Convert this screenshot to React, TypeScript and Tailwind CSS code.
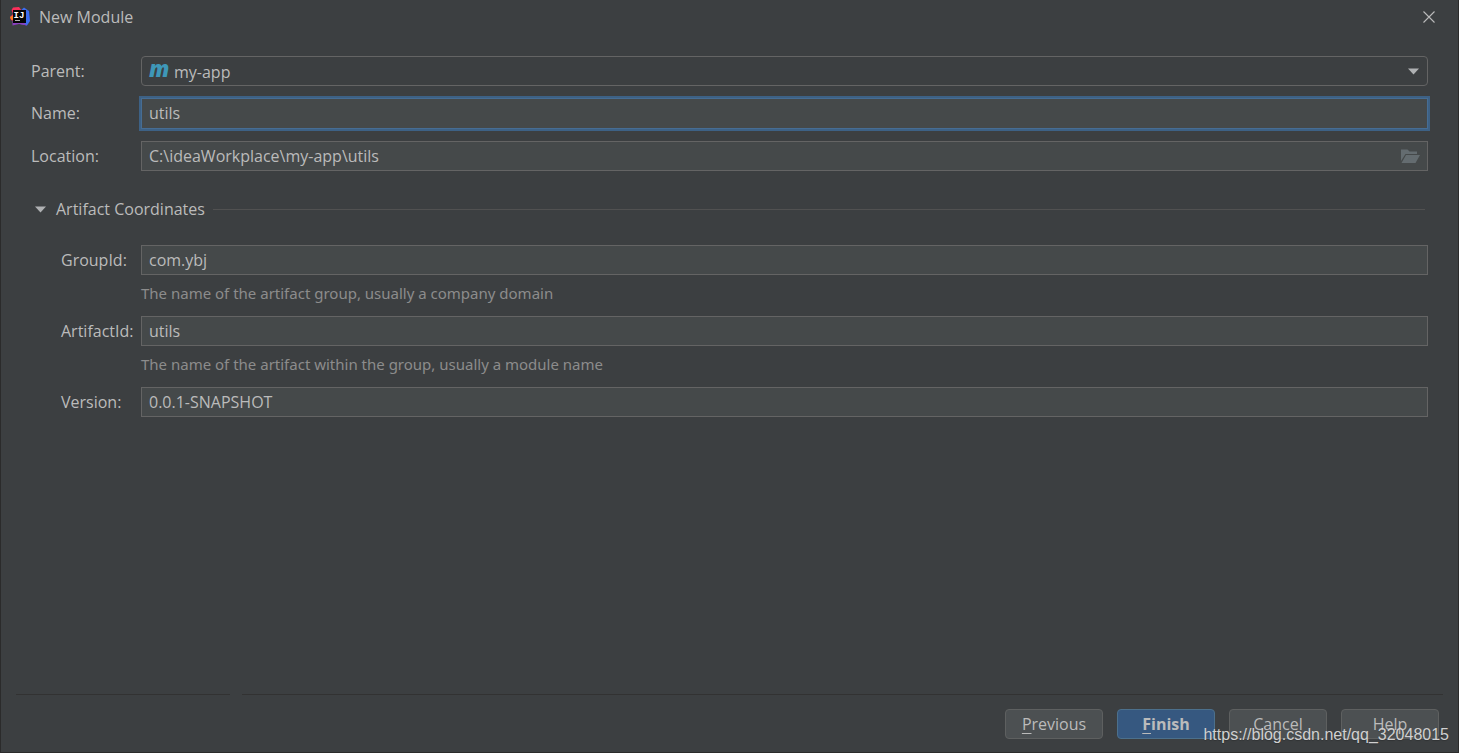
import { useState, type InputHTMLAttributes, type ReactNode } from 'react';
import { clsx } from 'clsx';

const IdeaLogo = () => (
    <svg viewBox="0 0 20 20" className="w-5 h-5 shrink-0" aria-hidden="true">
        <path d="M3 0.5 L9 0 L12 4 L8 16 L1 13 L0 10 L3 7 L1.5 3 Z" fill="#fc2f5b" />
        <path d="M0 10 L4 8 L5 13.5 L1 12.5 Z" fill="#fc801d" />
        <path d="M10 4 L14 0.5 L19 4 L20 14 L17 18.5 L10 17 Z" fill="#3b6cf0" />
        <path d="M2.5 14 L12 14 L17 18.5 L9 17 L2.5 18.5 Z" fill="#8a3fc0" />
        <rect x="3" y="3" width="13" height="13" fill="#050505" />
        <text x="3.5" y="10.5" fill="#fff" fontFamily="Liberation Mono" fontSize="9" fontWeight="700">IJ</text>
        <rect x="5" y="13" width="5" height="1" fill="#b0b0b0" />
    </svg>
);

const CloseIcon = () => (
    <svg viewBox="0 0 12 12" className="w-3 h-3" aria-hidden="true">
        <path d="M0.5 0.5 L11.5 11.5 M11.5 0.5 L0.5 11.5" stroke="#bbbbbb" strokeWidth="1.1" />
    </svg>
);

const ArrowIcon = ({ className }: { className?: string }) => (
    <svg viewBox="0 0 11 7" className={clsx('w-[11px] h-[7px]', className)} aria-hidden="true">
        <path d="M0 0.5 H11 L5.5 6.5 Z" fill="#afb1b3" />
    </svg>
);

const FolderIcon = () => (
    <svg viewBox="0 0 19 14" className="w-[19px] h-[14px]" aria-hidden="true">
        <path d="M0 0.5 H6.5 L8.5 2.5 H16 V5 H4.5 L0 12 Z" fill="#646c70" />
        <path d="M5 6 H19 L14.5 14 H0.5 Z" fill="#646c70" />
    </svg>
);

interface RowProps {
    id: string;
    label: string;
    hint?: string;
    nested?: boolean;
    children: ReactNode;
}

const Row = ({ id, label, hint, nested, children }: RowProps) => (
    <div className="flex items-start">
        <label
            htmlFor={id}
            className={clsx('shrink-0 h-[30px] leading-[30px]', nested ? 'w-20' : 'w-[110px]')}
        >
            {label}
        </label>
        <div className="flex-1 min-w-0 relative">
            {children}
            {hint && (
                <p className="mt-2 text-[15px] leading-5 text-[#8c8c8c] font-['Noto_Sans',sans-serif]">{hint}</p>
            )}
        </div>
    </div>
);

const TextField = ({ className, ...props }: InputHTMLAttributes<HTMLInputElement>) => (
    <input
        type="text"
        spellCheck={false}
        className={clsx('block w-full px-[7px] pb-px bg-[#45494a] border outline-none', className)}
        {...props}
    />
);

const plainField = 'h-[30px] border-[#646464]';
const focusedField = 'h-[31px] border-[#466d94] ring-2 ring-[#3d6185]';

interface DialogButtonProps {
    label: string;
    mnemonic?: boolean;
    primary?: boolean;
}

const DialogButton = ({ label, mnemonic, primary }: DialogButtonProps) => (
    <button
        type="button"
        className={clsx(
            'w-[98px] h-[30px] rounded-sm border',
            primary ? 'bg-[#365880] border-[#4c708c] font-bold' : 'bg-[#4c5052] border-[#5e6060]',
        )}
    >
        {mnemonic ? (
            <>
                <span className="underline underline-offset-3">{label[0]}</span>
                {label.slice(1)}
            </>
        ) : (
            label
        )}
    </button>
);

export default function App() {
    const [expanded, setExpanded] = useState(true);

    return (
        <div className="relative min-h-screen flex flex-col bg-[#3c3f41] border-x border-b border-[#2b2b2b] text-[#bbbbbb] text-base font-['Open_Sans',sans-serif]">
            {/* Title bar */}
            <header className="h-[34px] pl-[9px] pr-[23px] flex items-center gap-[9px]">
                <IdeaLogo />
                <h1 className="flex-1">New Module</h1>
                <button type="button" aria-label="Close">
                    <CloseIcon />
                </button>
            </header>

            <main className="flex-1 pl-[30px] pr-[30px] pt-[22px]">
                <div className="space-y-3">
                    <Row id="parent" label="Parent:">
                        <select
                            id="parent"
                            defaultValue="my-app"
                            className="block w-full h-[30px] pl-8 pr-8 pt-px appearance-none bg-[#3c3f41] border border-[#646464] rounded-sm outline-none"
                        >
                            <option value="my-app">my-app</option>
                        </select>
                        <span
                            aria-hidden="true"
                            className="absolute left-2 top-0 leading-6 text-[22px] font-extrabold italic text-[#3e97b8] pointer-events-none"
                        >
                            m
                        </span>
                        <ArrowIcon className="absolute right-[9px] top-3 pointer-events-none" />
                    </Row>
                    <Row id="name" label="Name:">
                        <TextField id="name" defaultValue="utils" className={focusedField} />
                    </Row>
                    <Row id="location" label="Location:">
                        <TextField
                            id="location"
                            defaultValue="C:\ideaWorkplace\my-app\utils"
                            className={plainField}
                        />
                        <button type="button" aria-label="Browse" className="absolute right-2 top-2">
                            <FolderIcon />
                        </button>
                    </Row>
                </div>

                {/* Artifact coordinates */}
                <div className="mt-7 flex items-center gap-2">
                    <button
                        type="button"
                        aria-expanded={expanded}
                        onClick={() => setExpanded(!expanded)}
                        className="flex items-center gap-[10px] pl-1 leading-5"
                    >
                        <ArrowIcon className={expanded ? '' : '-rotate-90'} />
                        Artifact Coordinates
                    </button>
                    <div className="flex-1 h-px mr-[3px] bg-[#515151]" />
                </div>

                {expanded && (
                    <div className="mt-[26px] pl-[30px] space-y-[13px]">
                        <Row nested id="group" label="GroupId:" hint="The name of the artifact group, usually a company domain">
                            <TextField id="group" defaultValue="com.ybj" className={plainField} />
                        </Row>
                        <Row
                            nested
                            id="artifact"
                            label="ArtifactId:"
                            hint="The name of the artifact within the group, usually a module name"
                        >
                            <TextField id="artifact" defaultValue="utils" className={plainField} />
                        </Row>
                        <Row nested id="version" label="Version:">
                            <TextField id="version" defaultValue="0.0.1-SNAPSHOT" className={plainField} />
                        </Row>
                    </div>
                )}
            </main>

            <footer className="px-[15px] pb-[13px]">
                <div className="flex gap-3">
                    <div className="w-[214px] h-px bg-[#323232]" />
                    <div className="flex-1 h-px bg-[#323232]" />
                </div>
                <div className="mt-[14px] pr-1 flex justify-end gap-[14px]">
                    <DialogButton label="Previous" mnemonic />
                    <DialogButton label="Finish" mnemonic primary />
                    <DialogButton label="Cancel" />
                    <DialogButton label="Help" />
                </div>
            </footer>

            <div className="absolute right-[9px] bottom-[7px] text-base leading-5 text-[#d0d0d0] text-shadow-xs font-['Liberation_Sans',sans-serif] pointer-events-none">
                https://blog.csdn.net/qq_32048015
            </div>
        </div>
    );
}
